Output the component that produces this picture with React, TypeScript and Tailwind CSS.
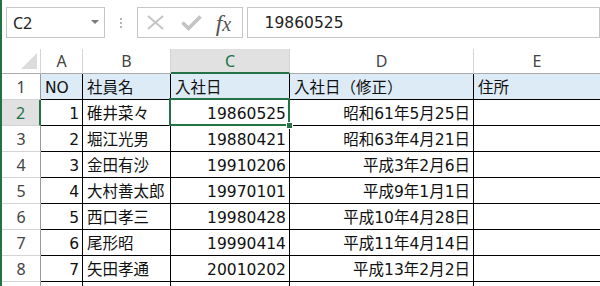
import React from "react";

const cellFont = "font-['DejaVu_Sans','Noto_Sans_CJK_JP',sans-serif] text-[15.5px] leading-[18px] text-[#111]";
const hdrFont = "font-['Noto_Sans','Open_Sans',sans-serif] text-[16px] leading-[18px]";

const data: [string, string, string, string][] = [
  ["1", "碓井菜々", "19860525", "昭和61年5月25日"],
  ["2", "堀江光男", "19880421", "昭和63年4月21日"],
  ["3", "金田有沙", "19910206", "平成3年2月6日"],
  ["4", "大村善太郎", "19970101", "平成9年1月1日"],
  ["5", "西口孝三", "19980428", "平成10年4月28日"],
  ["6", "尾形昭", "19990414", "平成11年4月14日"],
  ["7", "矢田孝通", "20010202", "平成13年2月2日"],
];

function TopBar() {
  return (
    <div className="h-[49px] pt-[7px] flex items-start">
      <div className="ml-[4px] w-[101px] h-[31px] border border-[#c6c6c6] flex items-center justify-between pl-[6px] pr-[5px]">
        <span className="font-['Noto_Sans',sans-serif] text-[16px] text-[#222]">C2</span>
        <svg width="8" height="5" viewBox="0 0 8 5">
          <path d="M0 0 L8 0 L4 4 Z" fill="#7a7a7a" />
        </svg>
      </div>
      <div className="w-[32px] h-[31px] flex flex-col items-center justify-center gap-[2px]">
        <span className="w-[2px] h-[2px] bg-[#b5b5b5]" />
        <span className="w-[2px] h-[2px] bg-[#b5b5b5]" />
        <span className="w-[2px] h-[2px] bg-[#b5b5b5]" />
      </div>
      <div className="w-[108px] h-[31px] border border-[#c6c6c6] flex items-center">
        <svg className="ml-[9px]" width="17" height="15" viewBox="0 0 17 15">
          <path d="M1 1 L16 14 M16 1 L1 14" stroke="#c4c4c4" strokeWidth="2" fill="none" />
        </svg>
        <svg className="ml-[17px]" width="21" height="16" viewBox="0 0 21 16">
          <path d="M1.5 7.5 L7.5 13.5 L19.5 1.5" stroke="#c4c4c4" strokeWidth="3.6" fill="none" />
        </svg>
        <span className="ml-[14px] font-['Liberation_Serif',serif] italic text-[24px] leading-none text-[#555]">
          f<span className="text-[20px]">x</span>
        </span>
      </div>
      <div className="ml-[4px] w-[360px] h-[31px] border border-[#c6c6c6] flex items-center pl-[17px]">
        <span className={cellFont + " text-[#222]"}>19860525</span>
      </div>
    </div>
  );
}

function ColHeader({ label, active }: { label: string; active?: boolean }) {
  return (
    <div
      className={
        "h-[25px] flex items-center justify-center " +
        hdrFont +
        (active
          ? " bg-[#e1e1e1] text-[#217346] border-b-2 border-b-[#217346] border-r border-r-[#d4d4d4]"
          : " bg-white text-[#444] border-b border-b-[#ababab] border-r border-r-[#d4d4d4]")
      }
    >
      {label}
    </div>
  );
}

function RowHeader({ n, active }: { n?: string; active?: boolean }) {
  return (
    <div
      className={
        "h-[26px] flex items-end justify-center pb-[3px] border-b border-b-[#d4d4d4] " +
        hdrFont +
        (active
          ? " bg-[#e1e1e1] text-[#217346] border-r-2 border-r-[#217346]"
          : " bg-white text-[#444] border-r border-r-[#9a9a9a]")
      }
    >
      {n}
    </div>
  );
}

function Cell({
  children,
  right,
  blue,
  selected,
}: {
  children?: React.ReactNode;
  right?: boolean;
  blue?: boolean;
  selected?: boolean;
}) {
  return (
    <div
      className={
        "relative h-[26px] flex items-end pb-[2px] border-r border-b border-black whitespace-nowrap " +
        cellFont +
        (right ? " justify-end pr-[3px]" : " justify-start pl-[4px]") +
        (blue ? " bg-[#ddebf7]" : " bg-white")
      }
    >
      {children}
      {selected && (
        <>
          <div className="absolute -left-[2px] -top-[2px] -right-[1px] -bottom-[1px] border-2 border-[#217346] z-10" />
          <div className="absolute -right-[4px] -bottom-[4px] w-[7px] h-[7px] bg-[#217346] border border-white z-20" />
        </>
      )}
    </div>
  );
}

export default function App() {
  return (
    <div className="w-[600px] h-[286px] overflow-hidden bg-white border-l-2 border-l-[#217346]">
      <TopBar />
      <div className="grid grid-cols-[39px_42px_88px_119px_184px_127px]">
        <div className="relative h-[25px] bg-white border-b border-b-[#ababab] border-r border-r-[#d4d4d4]">
          <svg className="absolute left-[18px] top-[4px]" width="17" height="17" viewBox="0 0 17 17">
            <path d="M17 0 L17 16 L1 16 Z" fill="#dcdcdc" />
          </svg>
        </div>
        <ColHeader label="A" />
        <ColHeader label="B" />
        <ColHeader label="C" active />
        <ColHeader label="D" />
        <ColHeader label="E" />

        <RowHeader n="1" />
        <Cell blue>NO</Cell>
        <Cell blue>社員名</Cell>
        <Cell blue>入社日</Cell>
        <Cell blue>入社日（修正）</Cell>
        <Cell blue>住所</Cell>

        {data.map((r, i) => (
          <React.Fragment key={i}>
            <RowHeader n={String(i + 2)} active={i === 0} />
            <Cell right>{r[0]}</Cell>
            <Cell>{r[1]}</Cell>
            <Cell right selected={i === 0}>{r[2]}</Cell>
            <Cell right>{r[3]}</Cell>
            <Cell />
          </React.Fragment>
        ))}

        <RowHeader />
        <Cell />
        <Cell />
        <Cell />
        <Cell />
        <Cell />
      </div>
    </div>
  );
}
